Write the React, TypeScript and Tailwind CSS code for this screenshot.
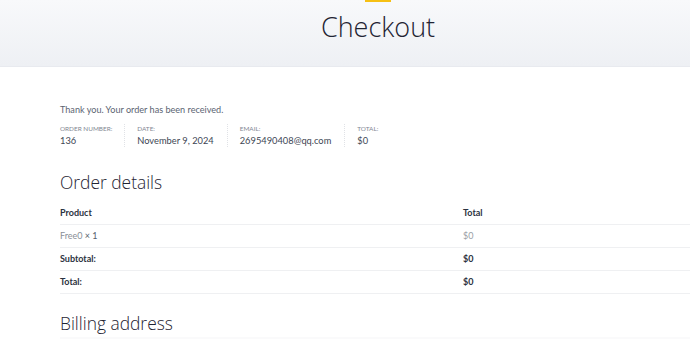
const metaItems = [
  { label: 'Order number:', value: '136' },
  { label: 'Date:', value: 'November 9, 2024' },
  { label: 'Email:', value: '2695490408@qq.com' },
  { label: 'Total:', value: '$0' },
];

const rows = [
  { label: 'Subtotal:', value: '$0' },
  { label: 'Total:', value: '$0' },
];

export default function App() {
  return (
    <div className="h-[339px] w-[690px] overflow-hidden bg-white font-['Lato',sans-serif] text-[#374151]">
      {/* page title band */}
      <header className="flex h-[67px] flex-col items-center border-b border-[#e8eaef] bg-gradient-to-b from-[#f8f9fb] to-[#eef0f4] pl-[66px]">
        <div className="h-[2px] w-[26px] bg-[#f6c014]" />
        <h1 className="mt-[9px] font-['Open_Sans',sans-serif] text-[27px] font-light leading-[32px] text-[#1f2433]">
          Checkout
        </h1>
      </header>

      <main className="pl-[60px] pt-[36px]">
        <p className="text-[9.1px] leading-[14px] text-[#5b6472]">Thank you. Your order has been received.</p>

        <ul className="mt-[7px] flex">
          {metaItems.map((item, i) => (
            <li
              key={item.label}
              className={
                i === 0
                  ? 'pr-[12px]'
                  : 'border-l border-dotted border-[#e0e2e6] pl-[12px] pr-[13px]'
              }
            >
              <div className="text-[6.4px] uppercase leading-[10px] text-[#7f8792]">{item.label}</div>
              <div className="text-[9.3px] leading-[13px] text-[#3d4654]">{item.value}</div>
            </li>
          ))}
        </ul>

        <h2 className="mt-[23px] font-['Open_Sans',sans-serif] text-[17.4px] font-light leading-[24px] text-[#1f2433]">
          Order details
        </h2>

        <table className="mt-[7px] w-[806px] border-collapse text-[9px]">
          <thead>
            <tr className="border-b border-[#eff0f2]">
              <th className="h-[23px] w-[403px] p-0 text-left font-bold text-[#2b3240]">Product</th>
              <th className="h-[23px] p-0 text-left font-bold text-[#2b3240]">Total</th>
            </tr>
          </thead>
          <tbody>
            <tr className="border-b border-[#eff0f2]">
              <td className="h-[23px] p-0 text-[#8a8f97]">
                Free0 <span className="text-[#55606e]">× 1</span>
              </td>
              <td className="h-[23px] p-0 text-[#9a9ea5]">$0</td>
            </tr>
            {rows.map((row) => (
              <tr key={row.label} className="border-b border-[#eff0f2]">
                <th className="h-[23px] p-0 text-left font-bold text-[#2b3240]">{row.label}</th>
                <td className="h-[23px] p-0 font-bold text-[#2b3240]">{row.value}</td>
              </tr>
            ))}
          </tbody>
        </table>

        <h2 className="mt-[17px] font-['Open_Sans',sans-serif] text-[17.4px] font-light leading-[24px] text-[#1f2433]">
          Billing address
        </h2>
        <div className="mt-[2px] h-[20px] bg-[#fafafb]" />
      </main>
    </div>
  );
}
